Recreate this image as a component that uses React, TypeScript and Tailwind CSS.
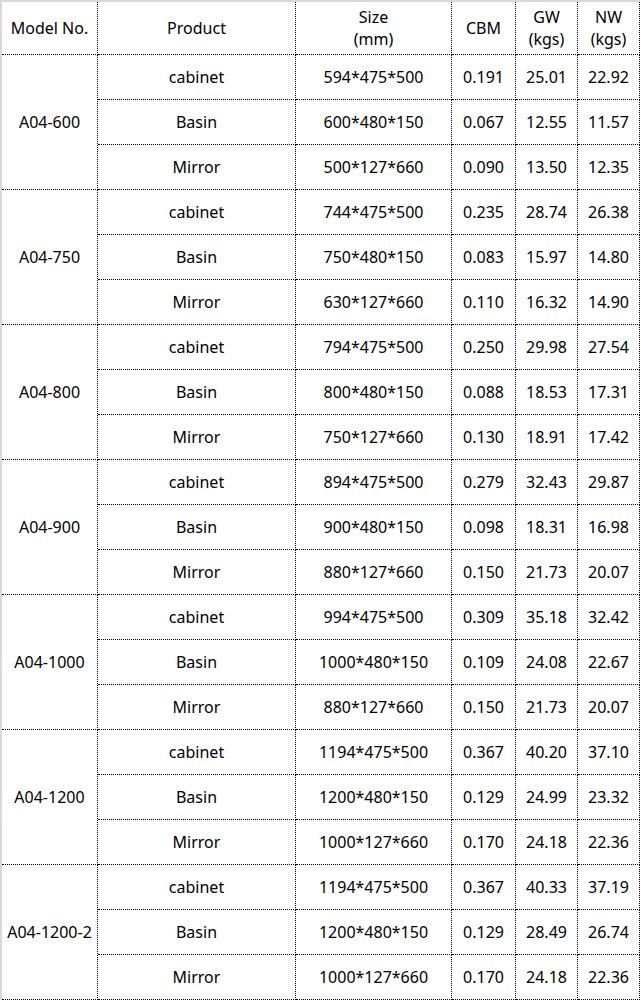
import { Fragment } from "react"

const groups = [
  {
    model: "A04-600",
    rows: [
      ["cabinet", "594*475*500", "0.191", "25.01", "22.92"],
      ["Basin", "600*480*150", "0.067", "12.55", "11.57"],
      ["Mirror", "500*127*660", "0.090", "13.50", "12.35"],
    ],
  },
  {
    model: "A04-750",
    rows: [
      ["cabinet", "744*475*500", "0.235", "28.74", "26.38"],
      ["Basin", "750*480*150", "0.083", "15.97", "14.80"],
      ["Mirror", "630*127*660", "0.110", "16.32", "14.90"],
    ],
  },
  {
    model: "A04-800",
    rows: [
      ["cabinet", "794*475*500", "0.250", "29.98", "27.54"],
      ["Basin", "800*480*150", "0.088", "18.53", "17.31"],
      ["Mirror", "750*127*660", "0.130", "18.91", "17.42"],
    ],
  },
  {
    model: "A04-900",
    rows: [
      ["cabinet", "894*475*500", "0.279", "32.43", "29.87"],
      ["Basin", "900*480*150", "0.098", "18.31", "16.98"],
      ["Mirror", "880*127*660", "0.150", "21.73", "20.07"],
    ],
  },
  {
    model: "A04-1000",
    rows: [
      ["cabinet", "994*475*500", "0.309", "35.18", "32.42"],
      ["Basin", "1000*480*150", "0.109", "24.08", "22.67"],
      ["Mirror", "880*127*660", "0.150", "21.73", "20.07"],
    ],
  },
  {
    model: "A04-1200",
    rows: [
      ["cabinet", "1194*475*500", "0.367", "40.20", "37.10"],
      ["Basin", "1200*480*150", "0.129", "24.99", "23.32"],
      ["Mirror", "1000*127*660", "0.170", "24.18", "22.36"],
    ],
  },
  {
    model: "A04-1200-2",
    rows: [
      ["cabinet", "1194*475*500", "0.367", "40.33", "37.19"],
      ["Basin", "1200*480*150", "0.129", "28.49", "26.74"],
      ["Mirror", "1000*127*660", "0.170", "24.18", "22.36"],
    ],
  },
]

const cell =
  "flex items-center justify-center text-center border-r border-b border-dotted border-black"

export default function App() {
  return (
    <div className="bg-white min-h-screen font-['Noto_Sans',sans-serif] text-[16px] leading-[22px] text-black">
      <div className="w-fit border-l-2 border-t-2 border-[#d9d9d9]">
        <div className="grid grid-cols-[96px_198px_156px_64px_62px_62px] grid-rows-[53px] auto-rows-[45px]">
          {/* header */}
          <div className={cell}>Model No.</div>
          <div className={cell}>Product</div>
          <div className={cell}>
            Size
            <br />
            (mm)
          </div>
          <div className={cell}>CBM</div>
          <div className={cell}>
            GW
            <br />
            (kgs)
          </div>
          <div className={cell}>
            NW
            <br />
            (kgs)
          </div>

          {groups.map((g) => (
            <Fragment key={g.model}>
              <div className={`${cell} row-span-3`}>{g.model}</div>
              {g.rows.map((r, i) =>
                r.map((v, j) => (
                  <div
                    key={`${g.model}-${i}-${j}`}
                    className={`${cell} ${i > 0 && j === 0 ? "col-start-2" : ""}`}
                  >
                    {v}
                  </div>
                ))
              )}
            </Fragment>
          ))}
        </div>
      </div>
    </div>
  )
}
